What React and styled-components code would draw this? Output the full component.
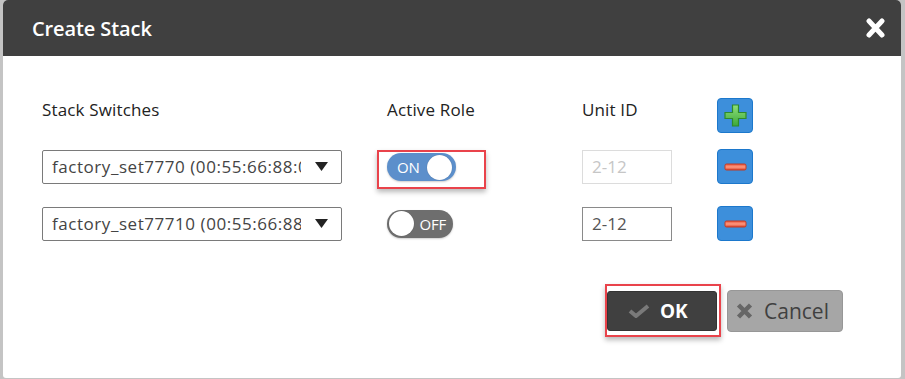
import React from 'react';
import styled, { createGlobalStyle } from 'styled-components';

const Global = createGlobalStyle`
  html, body { margin: 0; padding: 0; }
  body {
    background: #c4c4c4;
    font-family: "Open Sans", "Noto Sans", sans-serif;
    overflow: hidden;
  }
`;

const Page = styled.div`
  display: flex;
  height: 379px;
  padding: 0 4px 0 3px;
  box-sizing: border-box;
`;

const Dialog = styled.div`
  flex: 1;
  height: 378px;
  display: flex;
  flex-direction: column;
  background: #fff;
  border-radius: 5px 5px 3px 3px;
  overflow: hidden;
`;

const Header = styled.div`
  height: 56px;
  flex: none;
  background: #404040;
  display: flex;
  align-items: center;
  justify-content: space-between;
  padding: 0 16px 0 29px;
`;

const Title = styled.h1`
  margin: 0;
  font-size: 20px;
  font-weight: 600;
  color: #fff;
  letter-spacing: -0.1px;
`;

const CloseButton = styled.button`
  border: 0;
  background: none;
  padding: 0;
  width: 19px;
  height: 20px;
  display: flex;
  cursor: pointer;
`;

const Body = styled.div`
  padding: 41px 0 0 39px;
  display: flex;
  flex-direction: column;
`;

const Row = styled.div`
  display: grid;
  grid-template-columns: 345px 195px 135px 37px;
  grid-template-rows: ${p => p.$h}px;
  align-items: center;
  margin-top: ${p => p.$top || 0}px;
`;

const Label = styled.div`
  align-self: start;
  margin-top: 3px;
  font-size: 17px;
  line-height: 20px;
  letter-spacing: 0.15px;
  color: #222;
`;

const Select = styled.div`
  width: 300px;
  height: 34px;
  box-sizing: border-box;
  border: 1px solid #7a7a7a;
  border-radius: 2px;
  display: flex;
  align-items: center;
  padding-left: 9px;
`;

const SelectValue = styled.span`
  flex: 1;
  overflow: hidden;
  white-space: nowrap;
  font-size: 17px;
  letter-spacing: 0.55px;
  color: #444;
`;

const Arrow = styled.span`
  width: 40px;
  flex: none;
  display: flex;
  justify-content: center;
`;

const Highlight = styled.div`
  justify-self: start;
  align-self: start;
  border: 2px solid #e9434b;
  box-shadow: 0 3px 5px rgba(0, 0, 0, 0.28);
  padding: ${p => p.$pad};
  margin: ${p => p.$margin};
  display: flex;
`;

const Toggle = styled.div`
  justify-self: start;
  width: ${p => (p.$on ? 69 : 66)}px;
  height: 28px;
  border-radius: 14px;
  background: ${p => (p.$on ? '#5c8fcb' : '#6e6e6e')};
  display: flex;
  flex-direction: ${p => (p.$on ? 'row' : 'row-reverse')};
  align-items: center;
  justify-content: space-between;
  padding: 0 ${p => (p.$on ? '4px 0 10px' : '7px 0 2px')};
  box-sizing: border-box;
  box-shadow: 0 1px 2px rgba(0, 0, 0, 0.2);
`;

const ToggleText = styled.span`
  color: #fff;
  font-size: 15px;
  letter-spacing: -0.2px;
`;

const Knob = styled.span`
  width: 25px;
  height: 25px;
  border-radius: 50%;
  background: #fff;
  box-shadow: 0 0 1px rgba(0, 0, 0, 0.3);
`;

const UnitInput = styled.input`
  width: 90px;
  height: 34px;
  box-sizing: border-box;
  border: 1px solid ${p => (p.disabled ? '#dcdcdc' : '#8a8a8a')};
  background: #fff;
  padding: 0 0 0 9px;
  font-family: inherit;
  font-size: 17px;
  color: #555;
  outline: none;
  &:disabled { color: #c6c6c6; }
  &::placeholder { color: inherit; }
`;

const IconButton = styled.button`
  width: 36px;
  height: 35px;
  border: 1px solid #1c78cc;
  border-radius: 4px;
  background: #3d8fdb;
  display: flex;
  align-items: center;
  justify-content: center;
  padding: 0;
  cursor: pointer;
  box-sizing: border-box;
`;

const Footer = styled.div`
  display: flex;
  justify-content: flex-end;
  align-items: flex-start;
  gap: 6px;
  padding: 43px 58px 0 0;
`;

const OkButton = styled.button`
  width: 110px;
  height: 40px;
  border: 1px solid #333;
  border-radius: 3px;
  background: #404040;
  display: flex;
  align-items: center;
  gap: 10px;
  padding: 0 0 0 20px;
  box-sizing: border-box;
  color: #fff;
  font-family: inherit;
  font-size: 19px;
  font-weight: 700;
  cursor: pointer;
`;

const CancelButton = styled.button`
  margin-top: 6px;
  width: 116px;
  height: 42px;
  border: 1px solid #979797;
  border-radius: 4px;
  background: #a6a6a6;
  display: flex;
  align-items: center;
  gap: 11px;
  padding: 0 0 0 8px;
  box-sizing: border-box;
  color: #404040;
  font-family: inherit;
  font-size: 21px;
  font-weight: 400;
  cursor: pointer;
`;

const CloseIcon = () => (
  <svg width="19" height="20" viewBox="0 0 19 20">
    <path d="M3 3 L16 17 M16 3 L3 17" stroke="#fff" strokeWidth="5" strokeLinecap="round" />
  </svg>
);

const DownArrow = () => (
  <svg width="13" height="9" viewBox="0 0 13 9">
    <path d="M0 0 H13 L6.5 9 Z" fill="#222" />
  </svg>
);

const PlusIcon = () => (
  <svg width="23" height="23" viewBox="0 0 23 23">
    <defs>
      <linearGradient id="pg" x1="0" y1="0" x2="0" y2="1">
        <stop offset="0" stopColor="#8ee07a" />
        <stop offset="1" stopColor="#3da83a" />
      </linearGradient>
    </defs>
    <path d="M8.5 1 H14.5 V8.5 H22 V14.5 H14.5 V22 H8.5 V14.5 H1 V8.5 H8.5 Z" fill="url(#pg)" stroke="#2f8a2c" strokeWidth="1.2" />
  </svg>
);

const MinusIcon = ({ id }) => (
  <svg width="23" height="8" viewBox="0 0 23 8">
    <defs>
      <linearGradient id={id} x1="0" y1="0" x2="0" y2="1">
        <stop offset="0" stopColor="#e8553c" />
        <stop offset="0.5" stopColor="#ff9a80" />
        <stop offset="1" stopColor="#d9432c" />
      </linearGradient>
    </defs>
    <rect x="1" y="1" width="21" height="6" rx="1.5" fill={`url(#${id})`} stroke="#c23a24" strokeWidth="1" />
  </svg>
);

const CheckIcon = () => (
  <svg width="22" height="14" viewBox="0 0 22 14">
    <path d="M2 7 L8 12 L20 2" fill="none" stroke="#7a7a7a" strokeWidth="4" />
  </svg>
);

const XIcon = () => (
  <svg width="17" height="16" viewBox="0 0 17 16">
    <path d="M2.5 2 L14.5 14 M14.5 2 L2.5 14" stroke="#666" strokeWidth="4.5" />
  </svg>
);

export default function App() {
  return (
    <>
      <Global />
      <Page>
        <Dialog>
          <Header>
            <Title>Create Stack</Title>
            <CloseButton aria-label="Close"><CloseIcon /></CloseButton>
          </Header>
          <Body>
            <Row $h={36}>
              <Label>Stack Switches</Label>
              <Label>Active Role</Label>
              <Label>Unit ID</Label>
              <IconButton aria-label="Add"><PlusIcon /></IconButton>
            </Row>
            <Row $h={35} $top={16}>
              <Select>
                <SelectValue>factory_set7770 (00:55:66:88:00:01)</SelectValue>
                <Arrow><DownArrow /></Arrow>
              </Select>
              <Highlight $pad="1px 28px 6px 8px" $margin="1px 0 0 -10px">
                <Toggle $on>
                  <ToggleText>ON</ToggleText>
                  <Knob />
                </Toggle>
              </Highlight>
              <UnitInput disabled placeholder="2-12" />
              <IconButton aria-label="Remove"><MinusIcon id="m1" /></IconButton>
            </Row>
            <Row $h={35} $top={22}>
              <Select>
                <SelectValue>factory_set77710 (00:55:66:88:00:02)</SelectValue>
                <Arrow><DownArrow /></Arrow>
              </Select>
              <Toggle>
                <ToggleText>OFF</ToggleText>
                <Knob />
              </Toggle>
              <UnitInput placeholder="2-12" />
              <IconButton aria-label="Remove"><MinusIcon id="m2" /></IconButton>
            </Row>
          </Body>
          <Footer>
            <Highlight $pad="5px 2px 4px 0" $margin="0">
              <OkButton><CheckIcon />OK</OkButton>
            </Highlight>
            <CancelButton><XIcon />Cancel</CancelButton>
          </Footer>
        </Dialog>
      </Page>
    </>
  );
}
